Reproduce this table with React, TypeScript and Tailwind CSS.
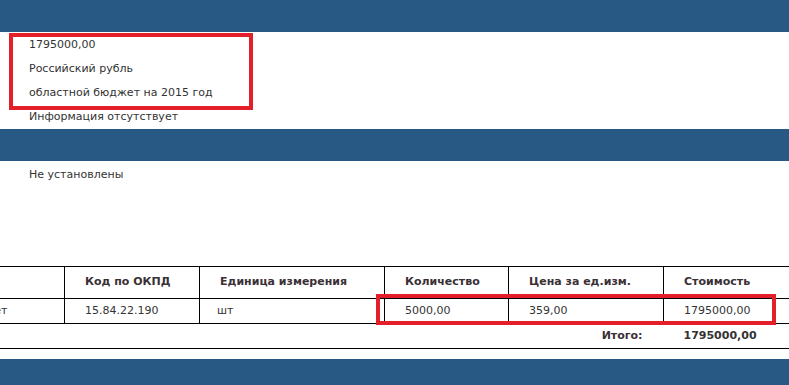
import React from 'react';

const rows = ['1795000,00', 'Российский рубль', 'областной бюджет на 2015 год', 'Информация отсутствует'];

export default function App() {
  return (
    <div
      className="relative w-[789px] h-[385px] overflow-hidden bg-white text-[11px] text-[#333]"
      style={{ fontFamily: '"DejaVu Sans", Verdana, sans-serif' }}
    >
      <div className="h-[32px] bg-[#285985]" />

      <div className="pt-[1px] pl-[29px]">
        {rows.map(r => (
          <div key={r} className="h-[24px] leading-[24px]">{r}</div>
        ))}
      </div>

      <div className="h-[32px] bg-[#285985]" />

      <div className="pt-[2px] pl-[29px]">
        <div className="h-[24px] leading-[24px]">Не установлены</div>
      </div>

      <div className="mt-[79px] overflow-hidden">
        <table className="ml-[-150px] w-[960px] table-fixed border-collapse">
          <colgroup>
            <col className="w-[214px]" />
            <col className="w-[135px]" />
            <col className="w-[185px]" />
            <col className="w-[124px]" />
            <col className="w-[155px]" />
            <col />
          </colgroup>
          <thead>
            <tr className="h-[32px] font-bold text-[#3a3036]">
              <th className="border border-black text-left pl-[20px] font-bold"></th>
              <th className="border border-black text-left pl-[20px] font-bold">Код по ОКПД</th>
              <th className="border border-black text-left pl-[20px] font-bold">Единица измерения</th>
              <th className="border border-black text-left pl-[20px] font-bold">Количество</th>
              <th className="border border-black text-left pl-[20px] font-bold">Цена за ед.изм.</th>
              <th className="border border-black text-left pl-[20px] font-bold">Стоимость</th>
            </tr>
          </thead>
          <tbody>
            <tr className="h-[25px]">
              <td className="border border-black pl-[2px] whitespace-nowrap overflow-hidden">Новогодний набор конфет</td>
              <td className="border border-black pl-[20px]">15.84.22.190</td>
              <td className="border border-black pl-[17px]">шт</td>
              <td className="border border-black pl-[20px]">5000,00</td>
              <td className="border border-black pl-[20px]">359,00</td>
              <td className="border border-black pl-[20px]">1795000,00</td>
            </tr>
            <tr className="h-[25px] font-bold">
              <td colSpan={5} className="border-y border-black text-right pr-[21px] text-[#3a3036]">Итого:</td>
              <td className="border-y border-black pl-[20px]">1795000,00</td>
            </tr>
          </tbody>
        </table>
      </div>

      <div className="mt-[10px] h-[40px] bg-[#285985]" />

      <div className="absolute left-[9px] top-[33px] w-[244px] h-[77px] border-4 border-[#e3202a]" />
      <div className="absolute left-[376px] top-[294px] w-[400px] h-[31px] border-4 border-[#e3202a]" />
    </div>
  );
}
